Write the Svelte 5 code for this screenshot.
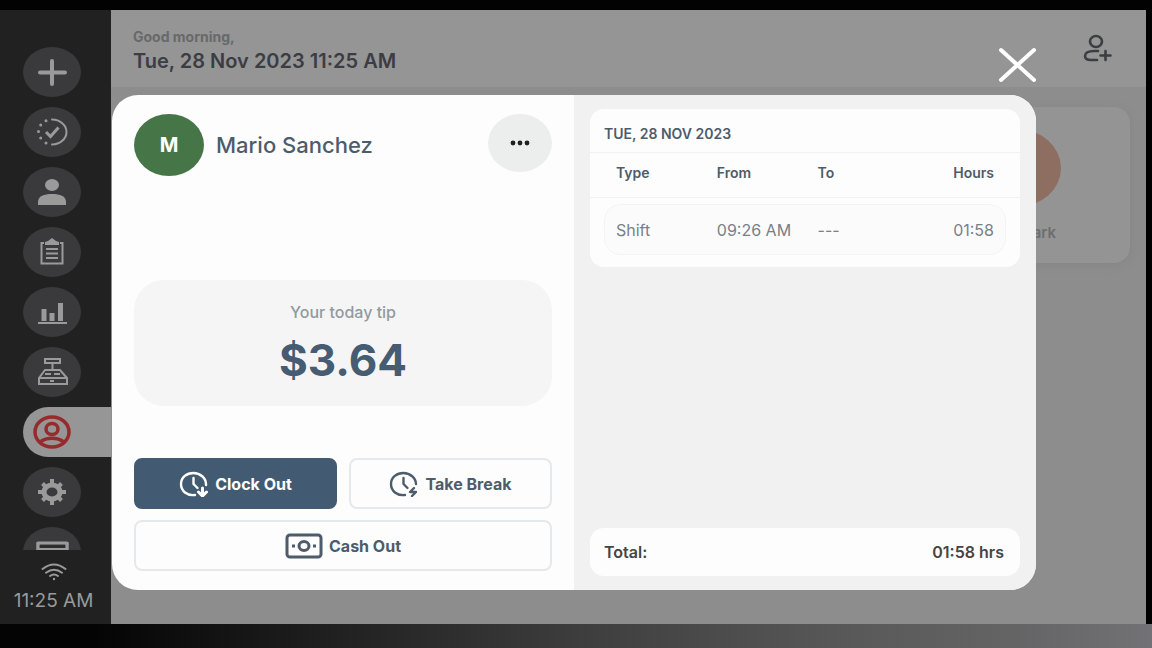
<script>
    const greeting = 'Good morning,';
    const today = 'Tue, 28 Nov 2023 11:25 AM';
    const time = '11:25 AM';

    const navItems = [
        { id: 'new', label: 'New order' },
        { id: 'orders', label: 'Orders' },
        { id: 'customers', label: 'Customers' },
        { id: 'tasks', label: 'Tasks' },
        { id: 'reports', label: 'Reports' },
        { id: 'register', label: 'Register' },
        { id: 'staff', label: 'Staff' },
        { id: 'settings', label: 'Settings' },
        { id: 'drawer', label: 'Drawer' },
    ];
    let active = 'staff';

    let open = true;

    const employee = { name: 'Mario Sanchez', tip: '$3.64' };
    const shifts = [{ type: 'Shift', from: '09:26 AM', to: '---', hours: '01:58' }];
</script>

<div class="screen">
    <div class="device">
        <aside>
            <nav>
                {#each navItems as item}
                    <button
                        class="nav-item"
                        class:active={item.id === active}
                        aria-label={item.label}
                        on:click={() => (active = item.id)}
                    >
                        <svg viewBox="0 0 40 36" width="40" height="36" fill="none" stroke="currentColor" stroke-width="2">
                            {#if item.id === 'new'}
                                <path d="M20 7v23M8 18.500h25" stroke-width="4" stroke-linecap="round" />
                            {:else if item.id === 'orders'}
                                <path d="M20 5.500a14.500 12.500 0 0 1 0 25" stroke-linecap="round" />
                                <path d="M14 18l4.500 4.500 8-9" stroke-width="3" />
                                <path d="M14 6.700v.1M8.700 11v.1M6.500 17.500v.1M8.700 24v.1M14 29v.1" stroke-width="3" stroke-linecap="round" />
                            {:else if item.id === 'customers'}
                                <ellipse cx="20" cy="11" rx="7" ry="6" fill="currentColor" stroke="none" />
                                <path d="M6 31v-3c0-6 6-8 14-8s14 2 14 8v3z" fill="currentColor" stroke="none" />
                            {:else if item.id === 'tasks'}
                                <path d="M12 9H9.500v20.500h21V9H28" />
                                <path d="M13 11V8l3-1 4-3 4 3 3 1v3z" fill="currentColor" stroke="none" />
                                <path d="M14 15h12M14 19.500h12M14 24h12" />
                            {:else if item.id === 'reports'}
                                <path d="M6 29h29" />
                                <path d="M12 15v12M20 19v8M28.500 9v18" stroke-width="5" />
                            {:else if item.id === 'register'}
                                <path d="M13 5h15v4H13zM20.500 9v7M13 16h15l7 8v6H7v-6zM7 24h28M13 20h6M22 20h6M18 27h4" />
                            {:else if item.id === 'staff'}
                                <ellipse cx="20" cy="18" rx="17" ry="15" stroke-width="3.500" />
                                <ellipse cx="20" cy="15" rx="6" ry="5.500" stroke-width="3.500" />
                                <path d="M8 28c7-5 17-5 24 0" stroke-width="3.500" />
                            {:else if item.id === 'settings'}
                                <ellipse cx="20" cy="18" rx="8" ry="7" stroke-width="5" />
                                <path d="M20 5v5M20 26v5M6 18h5M29 18h5M10.500 9.500l4 4M25.500 22.500l4 4M10.500 26.500l4-4M25.500 13.500l4-4" stroke-width="4" />
                            {:else}
                                <path d="M6 9h29v18H6z" stroke-width="3" stroke-linejoin="round" />
                                <path d="M6 12.500h29" stroke="#29292a" />
                                <path d="M6 15.500h29" stroke-width="3" />
                                <path d="M6 8v12M35 8v12" stroke-width="3" />
                            {/if}
                        </svg>
                    </button>
                {/each}
            </nav>
            <div class="status">
                <svg viewBox="0 0 26 18" width="26" height="18" fill="none" stroke="currentColor" stroke-width="2" stroke-linecap="round">
                    <path d="M1.500 6q11.500-9 23 0M5 9.700q8-6 16 0M9 13q4-3 8 0" />
                    <circle cx="13" cy="16" r="1.200" fill="currentColor" stroke="none" />
                </svg>
                <span>{time}</span>
            </div>
        </aside>

        <main>
            <header>
                <div>
                    <p class="greeting">{greeting}</p>
                    <p class="today">{today}</p>
                </div>
                <button class="add-user" aria-label="Add employee">
                    <svg viewBox="0 0 30 28" width="30" height="28" fill="none" stroke="currentColor" stroke-width="2.600" stroke-linecap="round">
                        <ellipse cx="14" cy="7.500" rx="6" ry="5.500" />
                        <path d="M16 17h-4c-6 0-9 2-9 5s3 4 6 4h6M23.500 17v9M18.500 21.500h10" />
                    </svg>
                </button>
            </header>

            <div class="people">
                <div class="person">
                    <span class="photo"></span>
                    <span class="person-name">Mark</span>
                </div>
            </div>

            {#if open}
                <div class="overlay">
                    <button class="close" aria-label="Close" on:click={() => (open = false)}>
                        <svg viewBox="0 0 40 36" width="40" height="36" fill="none" stroke="currentColor" stroke-width="4" stroke-linecap="round">
                            <path d="M4 3l33 30M37 3L4 33" />
                        </svg>
                    </button>

                    <div class="modal" role="dialog" aria-label={employee.name}>
                        <section class="profile">
                            <div class="profile-top">
                                <span class="avatar">{employee.name[0]}</span>
                                <h1>{employee.name}</h1>
                                <button class="more" aria-label="More">
                                    <svg viewBox="0 0 20 6" width="20" height="6" fill="currentColor">
                                        <circle cx="3" cy="3" r="2.400" />
                                        <circle cx="10" cy="3" r="2.400" />
                                        <circle cx="17" cy="3" r="2.400" />
                                    </svg>
                                </button>
                            </div>

                            <div class="tip">
                                <span class="tip-label">Your today tip</span>
                                <strong>{employee.tip}</strong>
                            </div>

                            <div class="actions">
                                <button class="action primary">
                                    <svg viewBox="0 0 30 26" width="30" height="26" fill="none" stroke="currentColor" stroke-width="2.400" stroke-linecap="round" stroke-linejoin="round">
                                        <path d="M16 24C8 25 2 20 2 13S8 2 14.500 2 27 7 27 13v1M14.500 7v6l4 4" />
                                        <path d="M23.500 17v7M19.500 21l4 4 4-4" stroke-width="3" />
                                    </svg>
                                    Clock Out
                                </button>
                                <button class="action">
                                    <svg viewBox="0 0 30 26" width="30" height="26" fill="none" stroke="currentColor" stroke-width="2.400" stroke-linecap="round" stroke-linejoin="round">
                                        <path d="M16 24C8 25 2 20 2 13S8 2 14.500 2 27 7 27 13M14.500 7v6l4 4" />
                                        <path d="M25 17l-4 4h6l-4 4" />
                                    </svg>
                                    Take Break
                                </button>
                                <button class="action wide">
                                    <svg viewBox="0 0 38 26" width="38" height="26" fill="none" stroke="currentColor" stroke-width="3">
                                        <rect x="2" y="2" width="34" height="22" rx="3" />
                                        <ellipse cx="19" cy="13" rx="5" ry="4.500" />
                                        <path d="M8.500 11.500v3M29.500 11.500v3" />
                                    </svg>
                                    Cash Out
                                </button>
                            </div>
                        </section>

                        <section class="timesheet">
                            <div class="day">
                                <h2>TUE, 28 NOV 2023</h2>
                                <table>
                                    <thead>
                                        <tr>
                                            <th>Type</th>
                                            <th>From</th>
                                            <th>To</th>
                                            <th class="hours">Hours</th>
                                        </tr>
                                    </thead>
                                    <tbody>
                                        {#each shifts as shift}
                                            <tr>
                                                <td>{shift.type}</td>
                                                <td>{shift.from}</td>
                                                <td>{shift.to}</td>
                                                <td class="hours">{shift.hours}</td>
                                            </tr>
                                        {/each}
                                    </tbody>
                                </table>
                            </div>
                            <div class="total">
                                <span>Total:</span>
                                <span>01:58 hrs</span>
                            </div>
                        </section>
                    </div>
                </div>
            {/if}
        </main>
    </div>
    <footer></footer>
</div>

<style>
    :global(body) {
        background: #020202;
    }

    .screen {
        display: flex;
        flex-direction: column;
        min-height: 620px;
        height: 100vh;
        box-sizing: border-box;
        padding-top: 10px;
        font-family: Inter, "Open Sans", sans-serif;
        color: #4d5c6a;
    }

    .screen * {
        box-sizing: border-box;
    }

    button {
        display: flex;
        align-items: center;
        justify-content: center;
        padding: 0;
        border: none;
        background: none;
        font: inherit;
        color: inherit;
        cursor: pointer;
    }

    p,
    h1,
    h2 {
        margin: 0;
    }

    svg {
        flex: none;
    }

    .device {
        display: flex;
        flex: 1;
        min-height: 0;
        margin-right: 6px;
    }

    footer {
        flex: none;
        height: 24px;
        background: linear-gradient(90deg, #040404 8%, #1c1c1d 26%, #3d3d3e 50%, #575757 72%, #646465 88%, #727276);
    }

    /* sidebar */
    aside {
        display: flex;
        flex-direction: column;
        flex: none;
        width: 111px;
        padding-top: 37px;
        background: #212122;
        color: #9a9a9a;
    }

    nav {
        display: flex;
        flex-direction: column;
        flex: 1;
        gap: 10px;
        min-height: 0;
        padding-left: 23px;
        overflow: hidden;
    }

    .nav-item {
        flex: none;
        width: 58px;
        height: 50px;
        border-radius: 50%;
        background: #3a3a3c;
    }

    .nav-item.active {
        justify-content: flex-start;
        width: 100%;
        padding-left: 9px;
        border-radius: 28px 0 0 28px;
        background: #969696;
        color: #962b2d;
    }

    .status {
        display: flex;
        flex-direction: column;
        align-items: center;
        gap: 8px;
        height: 74px;
        padding: 13px 4px 0 0;
        font-size: 19px;
        line-height: 24px;
    }

    /* page behind the dialog */
    main {
        position: relative;
        flex: 1;
        min-width: 0;
        background: #8d8d8d;
    }

    header {
        display: flex;
        justify-content: space-between;
        height: 77px;
        padding: 17px 34px 0 22px;
        background: #959595;
    }

    .greeting {
        font-size: 14px;
        font-weight: 700;
        line-height: 20px;
        color: #68696a;
    }

    .today {
        font-size: 20px;
        font-weight: 600;
        line-height: 28px;
        color: #3b3d42;
    }

    .add-user {
        height: 42px;
        color: #3b3d42;
    }

    .people {
        display: flex;
        justify-content: flex-end;
        padding: 20px 16px;
    }

    .person {
        display: flex;
        flex-direction: column;
        align-items: flex-end;
        gap: 16px;
        width: 218px;
        height: 156px;
        padding: 22px 69px 0 0;
        border-radius: 16px;
        background: #949494;
        box-shadow: 0 2px 8px #858585;
    }

    .photo {
        width: 88px;
        height: 78px;
        border-radius: 50%;
        background: #8d6e60;
    }

    .person-name {
        padding-right: 5px;
        font-size: 15px;
        font-weight: 600;
        line-height: 20px;
        color: #6d6e70;
    }

    /* employee dialog */
    .overlay {
        position: absolute;
        inset: 0;
        display: grid;
        grid-template-rows: 85px 1fr;
        padding: 0 110px 34px 1px;
    }

    .close {
        justify-self: end;
        width: 38px;
        height: 110px;
        color: #fff;
    }

    .modal {
        display: grid;
        grid-template-columns: 1fr 1fr;
        border-radius: 26px;
        background: #fdfdfd;
        overflow: hidden;
    }

    .profile {
        display: flex;
        flex-direction: column;
        padding: 19px 22px;
    }

    .profile-top {
        display: flex;
        align-items: center;
        gap: 12px;
    }

    .avatar {
        display: flex;
        align-items: center;
        justify-content: center;
        width: 70px;
        height: 62px;
        border-radius: 50%;
        background: #467648;
        color: #fff;
        font-size: 20px;
        font-weight: 700;
    }

    h1 {
        flex: 1;
        font-size: 22px;
        font-weight: 500;
        line-height: 28px;
    }

    .more {
        align-self: flex-start;
        width: 64px;
        height: 58px;
        border-radius: 50%;
        background: #eceeee;
        color: #1e2022;
    }

    .tip {
        display: flex;
        flex-direction: column;
        align-items: center;
        gap: 12px;
        height: 126px;
        margin: auto 0 52px;
        padding-top: 20px;
        border-radius: 30px;
        background: #f5f5f5;
    }

    .tip-label {
        font-size: 16px;
        font-weight: 500;
        line-height: 24px;
        color: #929a9f;
    }

    .tip strong {
        font-size: 44px;
        font-weight: 700;
        line-height: 48px;
        color: #465c72;
    }

    .actions {
        display: grid;
        grid-template-columns: 1fr 1fr;
        gap: 11px 12px;
    }

    .action {
        gap: 6px;
        height: 51px;
        border: 2px solid #e6e9eb;
        border-radius: 8px;
        font-size: 16px;
        font-weight: 700;
    }

    .action.primary {
        border-color: #435b72;
        background: #435b72;
        color: #fff;
    }

    .action.wide {
        grid-column: 1 / -1;
    }

    .timesheet {
        display: flex;
        flex-direction: column;
        justify-content: space-between;
        padding: 14px 16px;
        background: #f1f1f1;
    }

    .day {
        border-radius: 14px;
        background: #fdfdfd;
    }

    h2 {
        padding: 15px 14px 8px;
        border-bottom: 1px solid #f1f2f2;
        font-size: 14px;
        font-weight: 600;
        line-height: 20px;
    }

    table,
    thead,
    tbody {
        display: block;
    }

    tr {
        display: grid;
        grid-template-columns: repeat(3, 4fr) 3fr;
        align-items: center;
    }

    thead tr {
        height: 45px;
        padding: 0 26px 6px;
        border-bottom: 1px solid #f0f1f1;
    }

    tbody {
        padding: 6px 14px 12px;
    }

    tbody tr {
        height: 51px;
        padding: 0 11px;
        border: 1px solid #f2f3f3;
        border-radius: 16px;
        background: #fbfbfb;
    }

    th,
    td {
        padding: 0;
        text-align: left;
        white-space: nowrap;
    }

    th {
        font-size: 14px;
        font-weight: 600;
    }

    td {
        font-size: 16px;
        color: #77818a;
    }

    .hours {
        text-align: right;
    }

    .total {
        display: flex;
        align-items: center;
        justify-content: space-between;
        height: 48px;
        padding: 0 16px 0 14px;
        border-radius: 14px;
        background: #fdfdfd;
        font-size: 16px;
        font-weight: 600;
        color: #454545;
    }
</style>
